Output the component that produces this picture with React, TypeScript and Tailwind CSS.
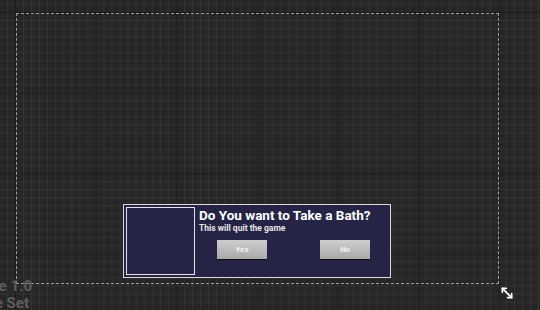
import { MoveDiagonal2 } from "lucide-react";

// UMG-style designer canvas with a confirmation dialog
const gridBg =
  "bg-[#262626] [background-image:linear-gradient(to_right,#1a1a1a_1px,transparent_1px),linear-gradient(to_bottom,#1a1a1a_1px,transparent_1px),linear-gradient(to_right,#343434_1px,transparent_1px),linear-gradient(to_bottom,#343434_1px,transparent_1px)] [background-size:80.6px_80.6px,80.6px_80.6px,8.06px_8.06px,8.06px_8.06px] [background-position:15px_12px]";

function DialogButton({ label }: { label: string }) {
  return (
    <div className="flex h-[19px] w-[50px] items-center justify-center bg-gradient-to-b from-[#cfcfcf] to-[#a9a9a9] shadow-[0_1px_0_#111]">
      <span className="text-[8px] font-bold text-[#f2f2f2]">{label}</span>
    </div>
  );
}

export default function App() {
  return (
    <div
      className={`relative h-[310px] w-[540px] overflow-hidden ${gridBg}`}
      style={{ fontFamily: "Roboto, 'Noto Sans', sans-serif" }}
    >
      <div className="pl-[16px] pt-[13px]">
        {/* canvas bounds */}
        <div className="flex h-[271px] w-[483px] flex-col justify-end border border-dashed border-[#9d9d9d] pb-[5px] pl-[106px]">
          <div className="h-[74px] w-[268px] border border-[#d9d9d9] bg-[#262446] p-[2px]">
            <div className="flex h-full gap-[4px]">
              <div className="h-[68px] w-[69px] shrink-0 border border-[#e4e4e4] bg-[#262446]" />
              <div className="flex flex-col">
                <div className="whitespace-nowrap pt-[1px] text-[13.5px] font-bold leading-[15px] text-white">
                  Do You want to Take a Bath?
                </div>
                <div className="whitespace-nowrap text-[8.5px] font-bold leading-[10px] text-[#e6e6e6]">
                  This will quit the game
                </div>
                <div className="mt-[7px] flex gap-[53px] pl-[18px]">
                  <DialogButton label="Yes" />
                  <DialogButton label="No" />
                </div>
              </div>
            </div>
          </div>
        </div>
      </div>

      {/* overlay labels */}
      <div className="absolute right-[508px] top-[278px] whitespace-nowrap text-right text-[15px] font-bold leading-[17px] text-[#5e5e5e]">
        DPI Scale 1.0
      </div>
      <div className="absolute right-[511px] top-[295px] whitespace-nowrap text-right text-[15px] font-bold leading-[17px] text-[#5e5e5e]">
        No Device Set
      </div>

      {/* resize handle */}
      <div className="absolute left-[499px] top-[285px] text-white">
        <MoveDiagonal2 size={16} strokeWidth={2.5} />
      </div>
    </div>
  );
}
